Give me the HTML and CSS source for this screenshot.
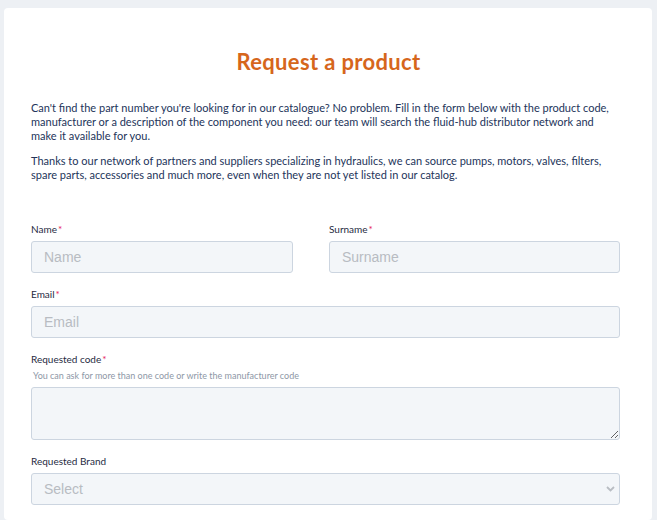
FILE: index.html
```html
<!DOCTYPE html>
<html lang="en">
<head>
<meta charset="utf-8">
<title>Request a product</title>
<link rel="stylesheet" href="styles.css">
</head>
<body>
<main class="card">
  <h1 class="title">Request a product</h1>
  <p class="intro">Can't find the part number you're looking for in our catalogue? No problem. Fill in the form below with the product code, manufacturer or a description of the component you need: our team will search the fluid-hub distributor network and make it available for you.</p>
  <p class="intro">Thanks to our network of partners and suppliers specializing in hydraulics, we can source pumps, motors, valves, filters, spare parts, accessories and much more, even when they are not yet listed in our catalog.</p>
  <form class="form">
    <div class="row two">
      <div class="field">
        <label class="label">Name<span class="req">*</span></label>
        <input class="input" type="text" placeholder="Name">
      </div>
      <div class="field">
        <label class="label">Surname<span class="req">*</span></label>
        <input class="input" type="text" placeholder="Surname">
      </div>
    </div>
    <div class="field">
      <label class="label">Email<span class="req">*</span></label>
      <input class="input" type="email" placeholder="Email">
    </div>
    <div class="field">
      <label class="label">Requested code<span class="req">*</span></label>
      <span class="hint">You can ask for more than one code or write the manufacturer code</span>
      <textarea class="input area"></textarea>
    </div>
    <div class="field">
      <label class="label">Requested Brand</label>
      <div class="select-wrap">
        <select class="input select"><option>Select</option></select>
        <svg class="chev" width="9" height="6" viewBox="0 0 9 6"><path d="M1 1l3.5 3.5L8 1" fill="none" stroke="#b9bdc3" stroke-width="1.8"/></svg>
      </div>
    </div>
  </form>
</main>
</body>
</html>
```
FILE: styles.css
```css
html, body { margin: 0; padding: 0; }
body {
  background: #edf0f4;
  font-family: "Lato", "Open Sans", sans-serif;
  color: #23345a;
}
.card {
  background: #fff;
  margin: 8px 5px 0 4px;
  border-radius: 4px;
  padding: 40px 32px 15px 27px;
}
.title {
  margin: 0 0 25px 6px;
  text-align: center;
  font-size: 22px;
  line-height: 28px;
  font-weight: 700;
  letter-spacing: 0.35px;
  color: #d6661c;
}
.intro {
  margin: 0 0 11px;
  font-size: 11px;
  line-height: 14px;
}
.form {
  margin-top: 40px;
  display: flex;
  flex-direction: column;
  gap: 14px;
}
.row.two {
  display: grid;
  grid-template-columns: 262px 1fr;
  column-gap: 36px;
}
.field { display: flex; flex-direction: column; }
.label {
  font-size: 10px;
  line-height: 14px;
  color: #1f2b3f;
  margin-bottom: 5px;
}
.req { color: #e5195a; margin-left: 1px; }
.hint {
  font-size: 9px;
  line-height: 12px;
  color: #8e97a6;
  margin: -1px 0 5px 2px;
}
.input {
  box-sizing: border-box;
  height: 32px;
  width: 100%;
  background: #f3f6f9;
  border: 1px solid #ccd5e0;
  border-radius: 3px;
  padding: 0 12px;
  font-family: "Liberation Sans", Arial, sans-serif;
  font-size: 14px;
  color: #b8bcc2;
  margin: 0;
}
.input::placeholder { color: #b8bcc2; }
.area { height: 53px; resize: vertical; display: block; }
.select-wrap { position: relative; }
.select { appearance: none; -webkit-appearance: none; }
.chev { position: absolute; right: 5px; top: 13px; }
```
